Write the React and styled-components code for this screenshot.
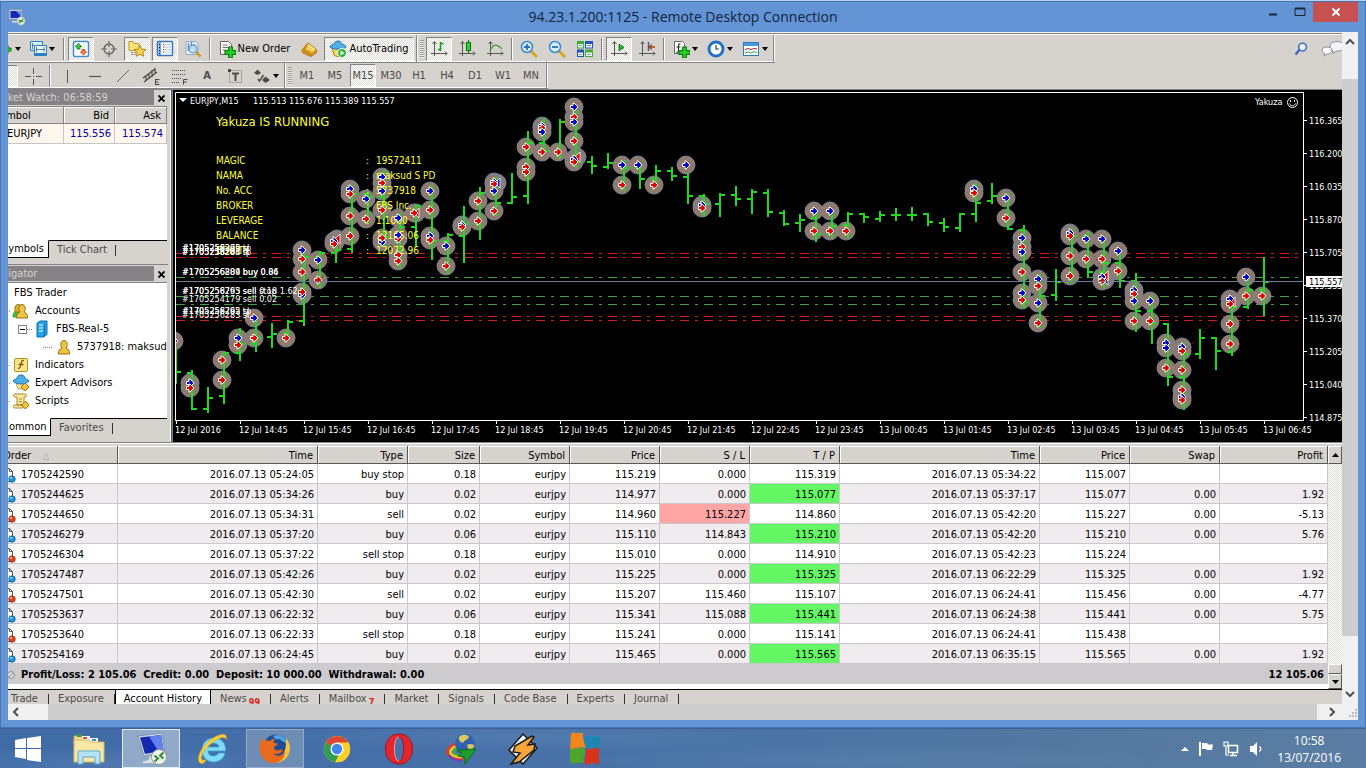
import React from 'react';
import styled, { createGlobalStyle, css } from 'styled-components';

const UI_FONT = '"DejaVu Sans Condensed", "DejaVu Sans", sans-serif';
const FACE = '#d6d3ce';
const dither = 'repeating-conic-gradient(#ffffff 0 25%, #dedbd6 0 50%) 0 0 / 2px 2px';

const GlobalStyle = createGlobalStyle`
  * { box-sizing: border-box; }
  body { margin: 0; font: 11px/14px ${UI_FONT}; color: #000; background: #4a74a9; }
  button { font: inherit; color: inherit; border: 0; padding: 0; background: none; }
  svg { flex: none; }
`;

/* ---------- remote desktop window ---------- */
const Page = styled.div`
  display: flex;
  flex-direction: column;
  min-height: 100vh;
  overflow: hidden;
`;
const Window = styled.section`
  flex: 1;
  display: flex;
  flex-direction: column;
  background: #6294d6;
  border-top: 1px solid #b9d2ee;
  padding-bottom: 8px;
  box-shadow: inset 1px 1px 0 #4673b2, inset -1px -1px 0 #4673b2;
`;
const TitleBar = styled.header`
  display: grid;
  grid-template-columns: 1fr auto 1fr;
  align-items: center;
  height: 31px;
  padding: 0 8px;
`;
const Title = styled.h1`
  margin: 0;
  font: 14px/20px "Open Sans", "Noto Sans", sans-serif;
  color: #14233b;
`;
const WindowButtons = styled.div`
  display: flex;
  justify-content: flex-end;
  align-self: start;
  padding-top: 1px;
`;
const WindowButton = styled.button`
  display: flex;
  align-items: center;
  justify-content: center;
  width: ${(p) => (p.$close ? 45 : 27)}px;
  height: 20px;
  background: ${(p) => (p.$close ? '#c75050' : 'transparent')};
`;
const ViewRow = styled.div`
  flex: 1;
  display: flex;
  margin: 0 8px;
`;
const RemoteView = styled.main`
  flex: 1;
  min-width: 0;
  overflow: hidden;
  background: ${FACE};
`;
/* the remote screen is wider than the view and scrolled a little to the right */
const Desktop = styled.div`
  margin-left: -14px;
`;
const VScroll = styled.div`
  display: flex;
  flex-direction: column;
  align-items: center;
  width: 16px;
  background: #f0f0f0;
`;
const VThumb = styled.div`
  width: 16px;
  flex: 1;
  background: #cdcdcd;
`;
const HScroll = styled.div`
  display: flex;
  height: 16px;
  margin: 0 8px;
  background: #f0f0f0;
`;
const HThumb = styled.div`
  flex: 1;
  background: #cdcdcd;
`;
const ScrollArrow = styled.button`
  display: flex;
  align-items: center;
  justify-content: center;
  width: ${(p) => p.$w || 16}px;
  height: ${(p) => p.$h || 16}px;
  padding: ${(p) => p.$pad || 0};
`;

/* ---------- toolbars ---------- */
const ToolRow = styled.div`
  display: flex;
  align-items: center;
  gap: 2px;
  height: ${(p) => p.$h}px;
  width: max-content;
  border-bottom: 1px solid #848284;
  box-shadow: inset 0 -1px 0 #fff;
`;
const ToolTop = styled.div`
  height: 3px;
  border-top: 1px solid #f2f1ee;
  border-bottom: 1px solid #fff;
  background: #848284;
`;
const ToolStrip = styled.div`
  display: flex;
  justify-content: space-between;
`;
const ToolButton = styled.button`
  display: flex;
  align-items: center;
  justify-content: center;
  gap: 2px;
  width: ${(p) => p.$w || 26}px;
  height: ${(p) => p.$h || 24}px;
  white-space: nowrap;
  ${(p) => p.$muted && css`color: #4c4a48;`}
  ${(p) => p.$on && css`
    background: ${dither};
    border: 1px solid #fff;
    border-top-color: #848284;
    border-left-color: #848284;
  `}
`;
const Divider = styled.span`
  width: 2px;
  height: 22px;
  margin: 0 1px;
  border-left: 1px solid #848284;
  border-right: 1px solid #fff;
`;
const BarEnd = styled.span`
  width: 2px;
  align-self: stretch;
  border-left: 1px solid #848284;
  border-right: 1px solid #fff;
`;
const Grip = styled.span`
  width: 4px;
  height: 18px;
  background: repeating-linear-gradient(#9c9a96 0 1px, #f0eeea 1px 2px);
`;
const ToolRight = styled.div`
  display: flex;
  align-items: center;
  gap: 13px;
  overflow: hidden;
  width: 48px;
`;

/* ---------- side panels ---------- */
const Middle = styled.div`
  display: flex;
  border-top: 1px solid #848284;
`;
const Side = styled.aside`
  display: flex;
  flex-direction: column;
  width: 178px;
  padding-right: 4px;
  box-shadow: inset -1px 0 0 #5a5856, inset -2px 0 0 #fff;
`;
const Panel = styled.section`
  display: flex;
  flex-direction: column;
  height: ${(p) => p.$h}px;
  ${(p) => p.$second && css`border-top: 1px solid #848284; padding-top: 1px;`}
`;
const PanelHead = styled.header`
  display: flex;
  height: 16px;
  h2 {
    flex: 1;
    margin: 0 0 1px;
    text-indent: -5px;
    font: 11px/15px ${UI_FONT};
    background: #848284;
    color: #d6d3ce;
    overflow: hidden;
    white-space: nowrap;
  }
  button { width: 14px; display: flex; align-items: center; justify-content: center; }
`;
const PanelBody = styled.div`
  flex: 1;
  background: #fff;
  border-top: 1px solid #848284;
  overflow: hidden;
  margin-right: 1px;
`;
const Quotes = styled.table`
  width: 100%;
  border-collapse: separate;
  border-spacing: 0;
  table-layout: fixed;
  th {
    height: 17px;
    padding: 1px 5px 0 0;
    font-weight: 400;
    text-align: right;
    background: ${FACE};
    border-right: 1px solid #848284;
    border-bottom: 1px solid #848284;
    box-shadow: inset 1px 1px 0 #fff;
  }
  td {
    height: 20px;
    padding: 0 3px 0 0;
    text-align: right;
    color: #0000a8;
    background: #fff7ed;
    border-right: 1px solid #c8c6c4;
    border-bottom: 1px solid #c8c6c4;
  }
  th:first-child { text-align: left; }
  td:first-child { text-align: left; padding-left: 13px; color: #000; }
`;
const SideTabs = styled.div`
  display: flex;
  height: 24px;
  margin-right: 1px;
  button {
    border-top: 1px solid #000;
    height: 18px;
    padding: 0 8px;
    color: #4c4a48;
  }
  button:first-child {
    width: ${(p) => p.$first}px;
    color: #000;
    background: #fff;
    border-top-color: #fff;
    border-right: 1px solid #000;
    border-bottom: 1px solid #000;
    text-align: left;
  }
  i { flex: 1; height: 18px; border-top: 1px solid #000; }
  i::before { content: ''; display: block; width: 1px; height: 11px; margin-top: 4px; background: #333; }
`;
const Tree = styled.ul`
  margin: 0;
  padding: 1px 0 0 13px;
  list-style: none;
`;
const TreeItem = styled.li`
  display: flex;
  align-items: center;
  gap: 5px;
  height: 18px;
  padding-left: ${(p) => p.$pad}px;
  white-space: nowrap;
`;
const Dots = styled.span`
  flex: none;
  width: ${(p) => p.$w}px;
  height: 1px;
  margin-right: -4px;
  background: repeating-linear-gradient(90deg, #848284 0 1px, transparent 1px 2px);
`;
const Expander = styled.button`
  display: flex;
  flex: none;
  width: 9px;
  height: 9px;
  margin-right: -5px;
  border: 1px solid #848284;
  align-items: center;
  justify-content: center;
  span { width: 5px; height: 1px; background: #000; }
`;
const ChartBox = styled.div`
  flex: 1;
  min-width: 0;
  background: #000;
  svg { display: block; width: 100%; height: auto; font-family: ${UI_FONT}; }
`;

/* ---------- terminal ---------- */
const Terminal = styled.section`
  border-top: 1px solid #848284;
  padding-top: 3px;
  box-shadow: inset 0 1px 0 #fff;
`;
const TerminalBody = styled.div`
  display: flex;
  background: #fff;
`;
const History = styled.table`
  flex: 1;
  min-width: 0;
  width: 100%;
  border-collapse: separate;
  border-spacing: 0;
  table-layout: fixed;
  margin-bottom: 5px;
  th {
    height: 18px;
    padding: 2px 4px 0 0;
    font-weight: 400;
    text-align: right;
    background: ${FACE};
    border-right: 1px solid #5a5856;
    border-bottom: 1px solid #5a5856;
    box-shadow: inset 1px 1px 0 #fff;
  }
  td {
    height: 20px;
    padding: 2px 3px 0 0;
    text-align: right;
    border-right: 1px solid #cac8ca;
    border-bottom: 1px solid #cac8ca;
    white-space: nowrap;
  }
  th:first-child { text-align: left; padding-left: 9px; }
  th:first-child span { margin-left: 12px; color: #9c9a96; font-size: 9px; line-height: 12px; }
  tbody tr:nth-child(even) { background: #efebef; }
  tfoot td {
    font-weight: 700;
    background: #cecbce;
    border: 0;
  }
  tfoot td:last-child { padding-right: 4px; }
`;
const OrderCell = styled.div`
  display: flex;
  align-items: center;
  gap: 5px;
  padding-left: 6px;
`;
const PriceCell = styled.td`
  ${(p) => p.$mark && css`
    background: ${p.$mark === 'tp' ? '#63f763' : '#ffa6a5'};
  `}
`;
const InnerScroll = styled.div`
  display: flex;
  flex-direction: column;
  justify-content: space-between;
  width: 14px;
  background: ${dither};
`;
const InnerButton = styled.button`
  display: flex;
  align-items: center;
  justify-content: center;
  width: 100%;
  height: ${(p) => p.$h}px;
  background: ${FACE};
  border: 1px solid #fff;
  border-right-color: #5a5856;
  border-bottom-color: #5a5856;
`;
const BottomTabs = styled.nav`
  display: flex;
  height: 15px;
  padding-left: 8px;
  border-top: 1px solid #000;
  overflow: hidden;
`;
const BottomTab = styled.button`
  display: flex;
  flex: none;
  height: 20px;
  padding: 2px 11px 0 9px;
  color: #4c4a48;
  background: linear-gradient(#333, #333) right 0 top 4px / 1px 11px no-repeat;
  ${(p) => p.$on && css`
    margin-top: -1px;
    padding: 3px 8px 0;
    color: #000;
    background: #fff;
    border: 1px solid #000;
    border-width: 0 1px;
  `}
  sub {
    margin-left: 2px;
    padding-top: 4px;
    font: 700 9px/12px ${UI_FONT};
    color: #e01818;
  }
`;

/* ---------- taskbar ---------- */
const Taskbar = styled.footer`
  display: flex;
  justify-content: space-between;
  height: 40px;
  background:
    radial-gradient(ellipse 220px 18px at 8% 90%, #6a8fc055, transparent),
    radial-gradient(ellipse 260px 14px at 38% 20%, #7096c440, transparent),
    radial-gradient(ellipse 300px 16px at 64% 80%, #7b9bc033, transparent),
    linear-gradient(90deg, #3f6ba6 0%, #456fa9 25%, #4a74a6 55%, #54789f 80%, #5b7da4 100%);
  border-top: 1px solid #3d6195;
`;
const TaskGroup = styled.div`
  display: flex;
  align-items: center;
  gap: 4px;
`;
const TaskButton = styled.button`
  display: flex;
  align-items: center;
  justify-content: center;
  width: ${(p) => p.$w || 58}px;
  height: 39px;
  ${(p) => p.$state === 'active' && css`
    background: #91a9c8;
    border: 1px solid #e3ecf6;
  `}
  ${(p) => p.$state === 'open' && css`
    background: #6d8db5;
    border: 1px solid #93abc9;
  `}
`;
const Tray = styled.div`
  display: flex;
  align-items: center;
  gap: 9px;
  padding-right: 25px;
`;
const Clock = styled.time`
  margin-left: 4px;
  text-align: center;
  font: 12px/17px "Open Sans", "Noto Sans", sans-serif;
  color: #fff;
`;

/* ---------- icons ---------- */
const Icon = ({ s = 18, w, children, vb }) => (
  <svg width={w || s} height={s} viewBox={vb || '0 0 18 18'} aria-hidden="true" fill="none">{children}</svg>
);
const Caret = () => (
  <svg width="6" height="4" viewBox="0 0 6 4" aria-hidden="true"><path d="M0 0h6L3 4z" fill="#000" /></svg>
);
const Chevron = ({ turn }) => (
  <svg width="10" height="10" viewBox="0 0 10 10" aria-hidden="true" fill="none" stroke="#505050" strokeWidth="2">
    <path d={{ up: 'M1 7l4-4 4 4', down: 'M1 3l4 4 4-4', left: 'M7 1L3 5l4 4', right: 'M3 1l4 4-4 4' }[turn]} />
  </svg>
);
const Plus = ({ x, y, s = 9 }) => (
  <g transform={`translate(${x} ${y}) scale(${s / 9})`}>
    <path d="M3 0h3v3h3v3H6v3H3V6H0V3h3z" fill="#25d425" stroke="#0a7d0a" strokeWidth="1" />
  </g>
);
const Axes = () => <path d="M4.500 2v14M1 13.500h16M2.500 4l2-2.500 2 2.500M15 11.500l2 2-2 2" stroke="#5a5856" />;

const icons = {
  newChart: <Icon><Plus x={7} y={5} /></Icon>,
  profiles: <Icon><path d="M1.500 1.500h12v9h-12z" fill="#d8eefc" stroke="#2a7fc4" /><path d="M5.500 5.500h12v10h-12z" fill="#e6f5ff" stroke="#2a7fc4" /><path d="M5.500 14h12" stroke="#2a7fc4" strokeWidth="2" /><path d="M7.500 7v5M15 7v5M7 9.500h9M3.500 3v6M3 5.500h2" stroke="#5a7f9e" /></Icon>,
  watch: <Icon><rect x="1.500" y="1.500" width="15" height="15" rx="1.500" fill="#fff" stroke="#3c8fd0" strokeWidth="1.500" /><path d="M6.500 3.500l3 3H8V9H5V6.500H3.500z" fill="#3fd04a" stroke="#0d7f1a" strokeWidth=".9" /><path d="M11.500 15l-3-3H10V9.500h3V12h1.500z" fill="#f7835e" stroke="#c8401a" strokeWidth=".9" /></Icon>,
  target: <Icon><circle cx="9" cy="9" r="5" stroke="#6b6967" strokeWidth="1.500" /><path d="M9 1v6M9 11v6M1 9h6M11 9h6" stroke="#6b6967" strokeWidth="1.200" /></Icon>,
  favs: <Icon><path d="M1 1.500h4l1 2h5v7H1z" fill="#f9e37c" stroke="#c09a1c" /><path d="M4 12v4M7 12v4" stroke="#222" strokeDasharray="1 1" /><path d="M12 5.500l1.800 3.700 4 .4-3 2.700.9 4-3.700-2-3.600 2 .8-4-3-2.700 4.100-.4z" fill="#ffd84a" stroke="#b3841a" /></Icon>,
  terminal: <Icon><rect x="1.500" y="1.500" width="15" height="14" rx="1" fill="#fff" stroke="#3776bd" strokeWidth="1.500" /><path d="M2.500 2h2.500v13H2.500z" fill="#6ea8e0" /><path d="M7 4.500h8M7 7h8M7 9.500h8M7 12h8" stroke="#b5c4e8" /><path d="M7.500 4v10" stroke="#b03030" strokeDasharray="1 1.500" /><path d="M3.500 4v10" stroke="#123" strokeDasharray="1 2" /></Icon>,
  tester: <Icon><path d="M2 1.500h10l2 2v11H2z" fill="#e9f1fa" stroke="#8fa6c0" /><path d="M4.500 3v8M7.500 2v7M10.500 4v6" stroke="#6d8fb8" strokeWidth="1.500" /><circle cx="9" cy="9" r="4" fill="#bfe0f7" fillOpacity=".8" stroke="#5590c4" /><path d="M12 12l4.500 4.500" stroke="#d19b2a" strokeWidth="2.500" /></Icon>,
  order: <Icon><path d="M2.500 1.500h8l3 3v10h-11z" fill="#fff" stroke="#666" /><path d="M4.500 5h5M4.500 7.500h6M4.500 10h4" stroke="#777" /><Plus x={7} y={7} s={11} /></Icon>,
  editor: <Icon><path d="M1.500 10.500L8 3l8.500 6.500v3L11 16.500l-8-3.500z" fill="#d98f14" stroke="#a36d10" strokeWidth=".8" /><path d="M8 3l8.500 6.500-5 4.500c-1-3-4-4-7-3z" fill="#f9cf57" stroke="#b8801c" strokeWidth=".8" /><path d="M8.500 5l5.500 4" stroke="#fff0b8" strokeWidth="1.200" /></Icon>,
  auto: <Icon><path d="M3 8l2 7c2 2 6 2 8 0l2-7z" fill="#f4d35b" stroke="#ad8420" /><path d="M1 7c0-2 3-2 4-3s1-3 4-3 3 2 4 3 4 1 4 3c-3 3-13 3-16 0z" fill="#4fb2e8" stroke="#1c78b0" /><circle cx="13" cy="13" r="4.500" fill="#27b93a" stroke="#fff" /><path d="M11.500 10.500v5l4-2.500z" fill="#fff" /></Icon>,
  bars: <Icon><Axes /><path d="M10.500 2v9M10.500 3.500h3M8 9.500h2.500" stroke="#12a012" strokeWidth="1.500" /></Icon>,
  candles: <Icon><Axes /><path d="M10.500 0v13" stroke="#0c700c" /><rect x="8.500" y="2.500" width="4" height="8" fill="#2fd62f" stroke="#0c700c" /></Icon>,
  line: <Icon><Axes /><path d="M4 11c3-7 6-8 12-2" stroke="#35a035" strokeWidth="1.300" /></Icon>,
  zoomIn: <Icon><path d="M11 11l6 6" stroke="#d9a520" strokeWidth="3" /><circle cx="7" cy="7" r="5.500" fill="#d9effc" stroke="#3a86cf" strokeWidth="1.500" /><path d="M4 7h6M7 4v6" stroke="#2a6fc0" strokeWidth="1.800" /></Icon>,
  zoomOut: <Icon><path d="M11 11l6 6" stroke="#d9a520" strokeWidth="3" /><circle cx="7" cy="7" r="5.500" fill="#d9effc" stroke="#3a86cf" strokeWidth="1.500" /><path d="M4 7h6" stroke="#2a6fc0" strokeWidth="1.800" /></Icon>,
  tile: <Icon><rect x="1" y="1" width="7" height="7.500" fill="#3fae2c" /><rect x="9" y="1" width="8" height="7.500" fill="#2450b8" /><rect x="1" y="9.500" width="7" height="7.500" fill="#2450b8" /><rect x="9" y="9.500" width="8" height="7.500" fill="#3fae2c" /><path d="M2 4h5v3.500H2zM10 4h6v3.500h-6zM2 12.500h5V16H2zM10 12.500h6V16h-6z" fill="#eef8ff" /><path d="M3 5.500h3M3 14.500h3M11 14.500h4" stroke="#7a9" /><path d="M11 5.500h4" stroke="#58c" /></Icon>,
  scroll: <Icon><Axes /><path d="M9 4v7l5-3.500z" fill="#25b925" stroke="#0c700c" strokeWidth=".8" /></Icon>,
  shift: <Icon><Axes /><path d="M10.500 2v9" stroke="#2f5fa0" strokeWidth="1.500" /><path d="M17 7h-5M14 4.500L11.500 7 14 9.500" stroke="#b8420f" strokeWidth="1.500" /></Icon>,
  indicators: <Icon><path d="M2.500 1.500h8l2 2v10h-10z" fill="#fff" stroke="#666" /><path d="M8.500 4c-2-.5-2 1-2 2v5c0 1-1 1.500-2 1M4.500 7h4" stroke="#333" strokeWidth="1.200" /><Plus x={7} y={7} s={11} /></Icon>,
  period: <Icon><circle cx="9" cy="9" r="7" fill="#fff" stroke="#2472c8" strokeWidth="3" /><path d="M9 5v4h3" stroke="#345" strokeWidth="1.200" /></Icon>,
  template: <Icon><rect x="1.500" y="2.500" width="15" height="13" fill="#fff" stroke="#2f78c0" /><path d="M2 3h14v3H2z" fill="#4c98dc" /><path d="M3 9.500l3-1 3 1 3-1 3 .5" stroke="#a03030" /><path d="M3 13l3-1 3 1 3-1.500 3 1.500" stroke="#30a050" /></Icon>,
  cursor: <Icon><path d="M2 2l8 8H6z" fill="#555" /></Icon>,
  cross: <Icon><path d="M9.500 1v6M9.500 12v6M1 9.500h6M12 9.500h6" stroke="#555" /><path d="M9 9h1v1H9z" fill="#555" /></Icon>,
  vline: <Icon><path d="M9.500 3v13" stroke="#555" /></Icon>,
  hline: <Icon><path d="M3 9.500h12" stroke="#555" strokeWidth="1.200" /></Icon>,
  trend: <Icon><path d="M3 15L15 3" stroke="#666" /></Icon>,
  channel: <Icon><path d="M1 11L13 2M2 15L15 5M4 8v6M7 6v6M10 3v7M13 1v6" stroke="#4c4a48" strokeWidth="1.200" /><path d="M13.500 12.500h4M13.500 15h3M13.500 17.500h4M13.500 12v6" stroke="#4c4a48" /></Icon>,
  fibo: <Icon><path d="M2 3.500h14M2 7.500h14M2 11.500h9M2 15.500h8" stroke="#4c4a48" strokeDasharray="1 1" /><path d="M13.500 12.500h4M13.500 15h3M13.500 12.500v5" stroke="#4c4a48" /></Icon>,
  label: <Icon><rect x="3.500" y="3.500" width="12" height="12" stroke="#777" strokeDasharray="1 1" /><path d="M6 6.500h7M9.500 6v8" stroke="#4c4a48" strokeWidth="2" /><path d="M2 2h3v3H2z" fill="#4c4a48" /></Icon>,
  arrows: <Icon><path d="M1 6l3.500-3.500L8 6 4.500 8zM9 13l3.500-3.500L17 13l-4.500 3z" fill="#4c4a48" /><path d="M5 12l1.500 2 4-6" stroke="#4c4a48" strokeWidth="1.500" /></Icon>,
};
const People = ({ two }) => (
  <Icon>
    {two && <path d="M1 15c0-4 1-5 3-6-2-3 0-7 3-6s3 4 1 6l2 6z" fill="#3fc43f" stroke="#2a8a2a" strokeWidth=".8" />}
    {two && <path d="M3 10c-1-6 2-9 5-7l1 7z" fill="#d9b02c" stroke="#94700f" strokeWidth=".8" />}
    <path d="M4.500 16c0-3.500 1-5 3.500-6C5.500 7 7 2.500 10 2.500s4.500 4.500 2 7.500c2.500 1 3.500 2.500 3.500 6z" fill="#edc544" stroke="#94700f" strokeWidth="1" />
  </Icon>
);
const Server = () => <Icon><path d="M4 3l3-2h7v13l-3 3H4z" fill="#27a3e8" stroke="#0c6fae" /><path d="M6 5h4M6 8h4M6 11h4" stroke="#fff" /><path d="M11.500 4v13" stroke="#0c6fae" /></Icon>;
const Func = () => <Icon><rect x="2.500" y="2.500" width="13" height="13" rx="1.500" fill="#fbe58a" stroke="#b8901e" /><path d="M12 4.500c-2-.5-2.500 1-3 4s-1 4-3 4M6.500 8.500h5" stroke="#7a5a10" strokeWidth="1.300" /></Icon>;
const Hat = () => <Icon><path d="M4 9h8l-1 6H6z" fill="#f4e2a0" stroke="#ad8420" strokeWidth=".7" /><path d="M1 7c1-2 3-1 4-3s1-3 4-3 3 1 4 3 3 1 4 3c-3 4-13 4-16 0z" fill="#4aaee6" stroke="#1d78ae" /><path d="M13 9l4 4-4 4-4-4z" fill="#f3c23a" stroke="#9e7414" /></Icon>;
const Scroll = () => <Icon><path d="M3 2h10c2 0 2 3 0 3H12v8H5V5H3C1 5 1 2 3 2zM3 13h8v3H3c-2 0-2-3 0-3z" fill="#fbe9a4" stroke="#ad8420" /><path d="M7 7h3M7 9.500h3" stroke="#ad8420" /><path d="M13.500 9l3.500 4-3.500 4-4-4z" fill="#f3c23a" stroke="#9e7414" /></Icon>;
const DocIcon = ({ sell }) => (
  <Icon s={16} vb="0 0 16 16">
    <path d="M.5 1.500h9l3 3v10h-12z" fill="#fff" stroke="#5a5856" /><path d="M9.500 1.500v3h3" stroke="#5a5856" />
    <circle cx="12" cy="12" r="3.200" fill={sell ? '#e2481d' : '#1e96e0'} stroke={sell ? '#8f2408' : '#0a5a94'} strokeWidth=".8" />
    <circle cx="11" cy="11" r="1" fill="#fff" fillOpacity=".7" />
  </Icon>
);
const RdpIcon = ({ s = 18 }) => (
  <Icon s={s}>
    <path d="M1 1.500h13v10H1z" fill="#c8ccd4" stroke="#7c8696" strokeWidth=".6" /><path d="M2.500 3h10v7h-10z" fill="#1029b8" /><path d="M8 3h4.500v5z" fill="#6f8dee" />
    <path d="M4 13h6v1.500H4z" fill="#d8dade" /><circle cx="13" cy="13" r="4.200" fill="#e9efe9" stroke="#8d9b8d" strokeWidth=".7" />
    <path d="M10.800 12l2 1.500-2 1.500M15.300 11l-2 1.500 2 1.500" stroke="#1f8a2a" strokeWidth="1.100" />
  </Icon>
);

/* ---------- chart data: [high, low, open, close] per bar ---------- */
const BAR_DATA = [
  [348, 383, 350, 372], [370, 409, 373, 409], [387, 412, 409, 398], [352, 403, 396, 353], [328, 360, 353, 344],
  [320, 351, 344, 338], [323, 347, 337, 334], [320, 337, 333, 322], [250, 325, 321, 257], [251, 287, 257, 253],
  [237, 262, 253, 250], [185, 252, 249, 194], [192, 223, 194, 197], [170, 245, 197, 237], [213, 268, 242, 227],
  [205, 245, 227, 206], [185, 259, 207, 241], [233, 273, 241, 235], [206, 262, 236, 224], [187, 239, 224, 193],
  [177, 215, 193, 203], [173, 203, 203, 197], [131, 203, 196, 143], [118, 153, 143, 151], [119, 158, 152, 122],
  [107, 167, 122, 162], [156, 173, 162, 166], [153, 168, 167, 163], [160, 190, 164, 168], [162, 188, 168, 179],
  [165, 185, 179, 171], [167, 180, 171, 176], [173, 203, 177, 196], [194, 216, 196, 204], [193, 216, 204, 195],
  [186, 205, 195, 199], [189, 213, 199, 192], [189, 216, 193, 212], [210, 225, 213, 224], [214, 231, 223, 220],
  [213, 241, 218, 234], [212, 237, 234, 226], [212, 237, 225, 214], [213, 222, 214, 217], [211, 221, 219, 215],
  [208, 220, 215, 215], [207, 220, 215, 215], [213, 225, 214, 222], [218, 231, 223, 227], [213, 231, 228, 214],
  [183, 221, 214, 203], [183, 203, 201, 196], [193, 229, 196, 229], [225, 308, 230, 302], [274, 327, 302, 296],
  [269, 300, 295, 282], [228, 282, 282, 236], [232, 277, 236, 272], [237, 287, 272, 263], [250, 287, 263, 281],
  [273, 331, 281, 311], [295, 343, 311, 323], [323, 385, 324, 377], [343, 409, 377, 354], [329, 358, 354, 338],
  [337, 369, 338, 351], [298, 355, 352, 307], [277, 308, 307, 290], [257, 315, 290, 282],
];
const MARKS = {
  0: 'b341', 1: 'b383 r388', 3: 'r360 r380', 4: 'b338 r345', 5: 'b318 r338', 7: 'r338',
  8: 'b250 r259 r272 b295 r292', 9: 'b260 r280', 10: 'b241 r244', 11: 'b189 r194 r216 r236', 12: 'b199 r219',
  13: 'b177 r183 b191 r210 b242 r238', 14: 'b218 r239 b235 r255 r261', 15: 'r213', 16: 'b191 r210 b236 r240',
  17: 'b246 r266', 18: 'b225 r227', 19: 'r201 r221', 20: 'b182 r184 b191 r211', 22: 'r147 r167 r172',
  23: 'b126 r128 b132 r152', 24: 'r152', 25: 'b107 r117 b122 r141 b159 r162', 28: 'b165 r185', 29: 'b165',
  30: 'r185', 32: 'b165', 33: 'b205 r208', 40: 'b211 r231', 41: 'b211 r231', 42: 'r231', 50: 'b189 r193',
  52: 'b198 r218', 53: 'b238 r247 b252 r272 b293 r300', 54: 'b279 r286 b303 r323', 56: 'b233 r236 r256 r276',
  57: 'b239 r259', 58: 'b239 r259 b277 r281', 59: 'b251 r271', 60: 'b290 r294 b301 r321', 61: 'b301 r321',
  62: 'b343 b348 r368', 63: 'b347 r351 r370 r390 b397 r400', 66: 'b299 r304 r324 r344', 67: 'b277 r296', 68: 'r296',
};
const BACK_MARKS = [[339, 239, 'r'], [418, 213, 'r'], [499, 183, 'b'], [579, 157, 'r'], [1107, 280, 'b'], [1107, 276, 'r'], [1234, 302, 'r']];
const barX = (i) => 176 + 16 * i;
const marks = Object.entries(MARKS).flatMap(([i, list]) =>
  list.split(' ').map((m) => ({ x: barX(+i) - 2, y: +m.slice(1), c: m[0] })));
const markColor = { b: '#0000c8', r: '#e60000' };
const RED = '#d01c1c';
const GREEN = '#3fa03f';
const LEVELS = [[253, RED], [257, RED], [277, GREEN], [296, GREEN], [304, GREEN], [316, RED], [320, RED]];
const PRICES = ['116.365', '116.200', '116.035', '115.870', '115.705', '115.535', '115.370', '115.205', '115.040', '114.875'];
const TIMES = ['12 Jul 2016', '12 Jul 14:45', '12 Jul 15:45', '12 Jul 16:45', '12 Jul 17:45', '12 Jul 18:45', '12 Jul 19:45', '12 Jul 20:45', '12 Jul 21:45', '12 Jul 22:45', '12 Jul 23:45', '13 Jul 00:45', '13 Jul 01:45', '13 Jul 02:45', '13 Jul 03:45', '13 Jul 04:45', '13 Jul 05:45', '13 Jul 06:45'];
const INFO = [['MAGIC', '19572411'], ['NAMA', 'maksud S PD'], ['No. ACC', '5737918'], ['BROKER', 'FBS Inc.'], ['LEVERAGE', '1:1000'], ['BALANCE', '12105.06'], ['EQUITY', '12072.96']];
const ORDER_LABELS = [
  [251, '#1705258265 tp'], [251, '#1705256379 sl'], [255, '#1705258204 tp'], [255, '#1705256283 sl'],
  [275, '#1705256204 buy 0.84'], [275, '#1705256889 buy 0.06'],
  [294, '#1705258265 sell 0.18 1.62'], [294, '#1705256793 sell stop'], [302, '#1705254179 sell 0.02'],
  [314, '#1705258265 tp'], [314, '#1705256792 sl'], [318, '#1705256283 sl'],
];

const Chart = () => (
  <svg viewBox="172 90 1170 352" role="img" aria-label="EURJPY M15 price chart">
    <clipPath id="plot"><path d="M176 92h1127v328H176z" /></clipPath>
    <rect x="172" y="90" width="1170" height="352" fill="#000" />
    <path d="M172.500 90v352" stroke="#848284" />
    {LEVELS.map(([y, c]) => (
      <path key={y} d={`M176 ${y}.5H1299`} stroke={c} strokeDasharray="9 6 3 6" />
    ))}
    <g fill="#8f7a6c" stroke="#74859a" strokeWidth="1" clipPath="url(#plot)">
      {BACK_MARKS.map(([x, y], i) => <circle key={i} cx={x - 2} cy={y} r="9" />)}
      {marks.map((m, i) => <circle key={i} cx={m.x} cy={m.y} r="9" />)}
    </g>
    <path d="M1186 350l46-47M322 278l15-36M401 240l15-32M1088 245l18 30" stroke="#c01818" strokeDasharray="3 2 1 2" strokeWidth=".8" />
    <g stroke="#22d822" strokeWidth="2" fill="none">
      {BAR_DATA.map(([h, l, o, c], i) => (
        <path key={i} d={`M${barX(i)} ${h}V${l + 1}${i ? `M${barX(i) - 5} ${o}h5` : ''}M${barX(i)} ${c}h5`} />
      ))}
    </g>
    <g fill="#ffff33" fontSize="10">
      <text x="216" y="126" fontSize="13">Yakuza IS RUNNING</text>
      {INFO.map(([k, v], i) => (
        <React.Fragment key={k}>
          <text x="216" y={164 + 15 * i}>{k}</text>
          <text x="366" y={164 + 15 * i}>:</text>
          <text x="376" y={164 + 15 * i}>{v}</text>
        </React.Fragment>
      ))}
    </g>
    <g clipPath="url(#plot)">
      {BACK_MARKS.map(([x, y, c], i) => (
        <path key={i} d={`M${x - 4} ${y}l5-5v10z`} fill={markColor[c]} stroke="#fff" strokeWidth=".8" />
      ))}
      {marks.map((m, i) => (
        <path key={i} d={`M${m.x - 3.5} ${m.y - 1.5}h2.500v-2.500h1l4 4-4 4h-1v-2.500h-2.500z`} fill={markColor[m.c]} stroke="#fff" strokeWidth="1" />
      ))}
    </g>
    <path d="M176 281.500H1303" stroke="#708090" />
    <path d="M175.500 420V92.500H1303.500V420.500H175" fill="none" stroke="#fff" />
    <g fill="#fff" fontSize="9">
      <path d="M179 98h8l-4 4z" />
      <text x="190" y="104">EURJPY,M15</text>
      <text x="253" y="104">115.513 115.676 115.389 115.557</text>
      {ORDER_LABELS.map(([y, t], i) => <text key={i} x="182" y={y}>{t}</text>)}
      <text x="1255" y="105">Yakuza</text>
      {PRICES.map((p, i) => (
        <React.Fragment key={p}>
          <path d={`M1304 ${120 + 33 * i}h3v1h-3z`} />
          <text x="1309" y={124 + 33 * i}>{p}</text>
        </React.Fragment>
      ))}
      <path d="M1306 276h36v11h-36z" />
      <text x="1309" y="285" fill="#000">115.557</text>
      {TIMES.map((t, i) => (
        <React.Fragment key={t}>
          <path d={`M${176 + 64 * i} 421h1v3h-1z`} />
          <text x={175 + 64 * i} y="433">{t}</text>
        </React.Fragment>
      ))}
    </g>
    <g fill="none" stroke="#fff">
      <circle cx="1292.500" cy="102.500" r="5" />
      <path d="M1289.500 103.500c1 3 5 3 6 0M1290.500 100v2M1294.500 100v2" />
    </g>
  </svg>
);

const COLUMNS = [['Order', 124], ['Time', 200], ['Type', 90], ['Size', 72], ['Symbol', 90], ['Price', 90], ['S / L', 90], ['T / P', 90], ['Time', 200], ['Price', 90], ['Swap', 90], ['Profit', 108]];
const ROWS = [
  ['1705242590', '05:24:05', 'buy stop', '0.18', '115.219', '0.000', '115.319', '05:34:22', '115.007', '', ''],
  ['1705244625', '05:34:26', 'buy', '0.02', '114.977', '0.000', '115.077', '05:37:17', '115.077', '0.00', '1.92', 'tp'],
  ['1705244650', '05:34:31', 'sell', '0.02', '114.960', '115.227', '114.860', '05:42:20', '115.227', '0.00', '-5.13', 'sl'],
  ['1705246279', '05:37:20', 'buy', '0.06', '115.110', '114.843', '115.210', '05:42:20', '115.210', '0.00', '5.76', 'tp'],
  ['1705246304', '05:37:22', 'sell stop', '0.18', '115.010', '0.000', '114.910', '05:42:23', '115.224', '', ''],
  ['1705247487', '05:42:26', 'buy', '0.02', '115.225', '0.000', '115.325', '06:22:29', '115.325', '0.00', '1.92', 'tp'],
  ['1705247501', '05:42:30', 'sell', '0.02', '115.207', '115.460', '115.107', '06:24:41', '115.456', '0.00', '-4.77'],
  ['1705253637', '06:22:32', 'buy', '0.06', '115.341', '115.088', '115.441', '06:24:38', '115.441', '0.00', '5.75', 'tp'],
  ['1705253640', '06:22:33', 'sell stop', '0.18', '115.241', '0.000', '115.141', '06:24:41', '115.438', '', ''],
  ['1705254169', '06:24:45', 'buy', '0.02', '115.465', '0.000', '115.565', '06:35:15', '115.565', '0.00', '1.92', 'tp'],
];
const TABS = [['Trade'], ['Exposure'], ['Account History'], ['News', '99'], ['Alerts'], ['Mailbox', '7'], ['Market'], ['Signals'], ['Code Base'], ['Experts'], ['Journal']];

const Tool = ({ icon, menu, label, ...rest }) => (
  <ToolButton type="button" aria-label={label || icon} {...rest}>{icons[icon]}{menu && <Caret />}</ToolButton>
);
const CloseX = () => (
  <svg width="7" height="7" viewBox="0 0 7 7" aria-hidden="true"><path d="M0.500 0.500l6 6M6.500 0.500l-6 6" stroke="#000" strokeWidth="1.800" /></svg>
);

const Toolbars = () => (
  <>
    <ToolTop />
    <ToolStrip>
      <ToolRow $h={28}>
        <Tool icon="newChart" menu $w={28} />
        <Tool icon="profiles" menu $w={36} />
        <Divider />
        <Tool icon="watch" $on />
        <Tool icon="target" />
        <Tool icon="favs" $on />
        <Tool icon="terminal" $on />
        <Tool icon="tester" />
        <Divider />
        <ToolButton type="button" $w={80}>{icons.order}New Order</ToolButton>
        <Tool icon="editor" />
        <ToolButton type="button" $w={90} $on>{icons.auto}AutoTrading</ToolButton>
        <BarEnd />
        <Grip />
        <Tool icon="bars" $on />
        <Tool icon="candles" />
        <Tool icon="line" />
        <Divider />
        <Tool icon="zoomIn" />
        <Tool icon="zoomOut" />
        <Tool icon="tile" />
        <Divider />
        <Tool icon="scroll" $on />
        <Tool icon="shift" />
        <Divider />
        <Tool icon="indicators" menu $w={33} />
        <Tool icon="period" menu $w={33} />
        <Tool icon="template" menu $w={33} />
        <BarEnd />
      </ToolRow>
      <ToolRight>
        <Icon s={14}><circle cx="11" cy="6.500" r="5" fill="#eef4ff" stroke="#3f6cc0" strokeWidth="2" /><path d="M7 10l-5 6" stroke="#3f6cc0" strokeWidth="3" /></Icon>
        <Icon s={16} w={24} vb="0 0 24 16"><path d="M9 5c0-6 14-6 14 0s-8 5-8 5l-3 3v-3c-2-1-3-3-3-5z" fill="#f4f4f8" stroke="#8c8a90" /><path d="M1 9c0-4 10-4 10 0s-5 4-5 4l-3 2 .5-2.500C2 12 1 10 1 9z" fill="#fff" stroke="#8c8a90" /></Icon>
      </ToolRight>
    </ToolStrip>
    <ToolRow $h={26}>
      <Tool icon="cursor" $w={24} $h={22} $on />
      <Tool icon="cross" $h={22} />
      <Divider />
      {['vline', 'hline', 'trend', 'channel', 'fibo'].map((n) => <Tool key={n} icon={n} $h={22} />)}
      <ToolButton type="button" $h={22} $muted><b>A</b></ToolButton>
      <Tool icon="label" $h={22} />
      <Tool icon="arrows" menu $w={32} $h={22} />
      <BarEnd />
      <Grip />
      {['M1', 'M5', 'M15', 'M30', 'H1', 'H4', 'D1', 'W1', 'MN'].map((t) => (
        <ToolButton key={t} type="button" $h={23} $muted $on={t === 'M15'}>{t}</ToolButton>
      ))}
      <BarEnd />
    </ToolRow>
  </>
);

const SidePanels = () => (
  <Side>
    <Panel $h={174}>
      <PanelHead><h2>Market Watch: 06:58:59</h2><button type="button" aria-label="Close Market Watch"><CloseX /></button></PanelHead>
      <PanelBody>
        <Quotes>
          <colgroup><col /><col width="51" /><col width="52" /></colgroup>
          <thead><tr><th>Symbol</th><th>Bid</th><th>Ask</th></tr></thead>
          <tbody><tr><td>EURJPY</td><td>115.556</td><td>115.574</td></tr></tbody>
        </Quotes>
      </PanelBody>
      <SideTabs $first={55}><button type="button">Symbols</button><button type="button">Tick Chart</button><i /></SideTabs>
    </Panel>
    <Panel $second $h={178}>
      <PanelHead><h2>Navigator</h2><button type="button" aria-label="Close Navigator"><CloseX /></button></PanelHead>
      <PanelBody>
        <Tree>
          <TreeItem $pad={7}>FBS Trader</TreeItem>
          <TreeItem $pad={0}><Dots $w={4} /><People two />Accounts</TreeItem>
          <TreeItem $pad={11}><Expander type="button" aria-label="Collapse"><span /></Expander><Dots $w={5} /><Server />FBS-Real-5</TreeItem>
          <TreeItem $pad={36}><Dots $w={10} /><People />5737918: maksud S PD</TreeItem>
          <TreeItem $pad={0}><Dots $w={4} /><Func />Indicators</TreeItem>
          <TreeItem $pad={0}><Dots $w={4} /><Hat />Expert Advisors</TreeItem>
          <TreeItem $pad={0}><Dots $w={4} /><Scroll />Scripts</TreeItem>
        </Tree>
      </PanelBody>
      <SideTabs $first={57}><button type="button">Common</button><button type="button">Favorites</button><i /></SideTabs>
    </Panel>
  </Side>
);

const HistoryPanel = () => (
  <Terminal>
    <TerminalBody>
      <History>
        <colgroup>{COLUMNS.map(([, w], i) => <col key={i} width={w} />)}</colgroup>
        <thead>
          <tr>{COLUMNS.map(([n], i) => <th key={i}>{n}{i === 0 && <span>△</span>}</th>)}</tr>
        </thead>
        <tbody>
          {ROWS.map(([id, t1, type, size, p1, sl, tp, t2, p2, swap, profit, mark]) => (
            <tr key={id}>
              <td><OrderCell><DocIcon sell={type.startsWith('sell')} />{id}</OrderCell></td>
              <td>2016.07.13 {t1}</td>
              <td>{type}</td>
              <td>{size}</td>
              <td>eurjpy</td>
              <td>{p1}</td>
              <PriceCell $mark={mark === 'sl' && 'sl'}>{sl}</PriceCell>
              <PriceCell $mark={mark === 'tp' && 'tp'}>{tp}</PriceCell>
              <td>2016.07.13 {t2}</td>
              <td>{p2}</td>
              <td>{swap}</td>
              <td>{profit}</td>
            </tr>
          ))}
        </tbody>
        <tfoot>
          <tr>
            <td colSpan={10}>
              <OrderCell>
                <Icon s={16} vb="0 0 16 16"><circle cx="11" cy="8" r="3.500" fill="#ddd" stroke="#888" /><path d="M9 10l4-4" stroke="#888" /></Icon>
                Profit/Loss: 2 105.06&nbsp; Credit: 0.00&nbsp; Deposit: 10 000.00&nbsp; Withdrawal: 0.00
              </OrderCell>
            </td>
            <td colSpan={2}>12 105.06</td>
          </tr>
        </tfoot>
      </History>
      <InnerScroll>
        <InnerButton type="button" aria-label="Scroll up" $h={18}><svg width="7" height="4" viewBox="0 0 7 4"><path d="M0 4h7L3.500 0z" /></svg></InnerButton>
        <div>
          <InnerButton as="div" $h={10} />
          <InnerButton type="button" aria-label="Scroll down" $h={15}><svg width="7" height="4" viewBox="0 0 7 4"><path d="M0 0h7L3.500 4z" /></svg></InnerButton>
        </div>
      </InnerScroll>
    </TerminalBody>
    <BottomTabs>
      {TABS.map(([name, count]) => (
        <BottomTab key={name} type="button" $on={name === 'Account History'}>{name}{count && <sub>{count}</sub>}</BottomTab>
      ))}
    </BottomTabs>
  </Terminal>
);

const TASKS = {
  explorer: <Icon s={32} vb="0 0 32 32"><path d="M1 3h7l2 2h6v5H1z" fill="#f1d98a" stroke="#c9a94e" /><path d="M4 1h5v3H4z" fill="#3a9b52" /><path d="M9 3h8v4H9z" fill="#fff" /><path d="M10 4h4v2h-4z" fill="#d9502e" /><path d="M17 5h8v4h-8z" fill="#fff" /><path d="M19 6h4v2h-4z" fill="#3b8fd8" /><path d="M1 7h15l2 2h13v20H1z" fill="#f8e7a5" stroke="#d5b85e" /><path d="M5 31V19c0-1 1-1 1-1h20c1 0 1 1 1 1v12h-5v-7H10v7z" fill="#b5e2f6" stroke="#58a9d0" /></Icon>,
  rdp: <Icon s={32} vb="0 0 32 32"><path d="M3 3l24-3 3 19-21 4z" fill="#d5dae4" stroke="#8490a8" /><path d="M5 4.500L26 2l2.500 15.500L10 21z" fill="#1228b0" /><path d="M14 3.500L26 2l2.500 15.500-5 1z" fill="#5f80ee" /><path d="M14 23h7l2 4h2l-1 3-16 .500-1-2 7-2z" fill="#dfe3ea" stroke="#9aa4b4" strokeWidth=".6" /><circle cx="24" cy="24" r="7.500" fill="#eef2ee" stroke="#8d9b8d" /><path d="M19.500 22.500l3.500 3-3.500 3M28.500 19.500l-3.500 3 3.500 3" stroke="#2a8a2a" strokeWidth="2" /></Icon>,
  ie: <Icon s={32} vb="0 0 32 32"><path d="M28 20h-6.500c-1 2-3 3-5.500 3-3 0-5-2-5-5h17.500C29 10 24 5 17 5S5 10 5 17s5 12 11.500 12S27 25 28 20zM11 14c.5-2.500 2.500-4 5.500-4s5 1.500 5.500 4z" fill="#7fdcf9" stroke="#3aa4d8" strokeWidth=".8" /><path d="M5 30.500c-2.500 0-4-2-3.500-6C3 15 14 4 24 1.500c4-1 6 1 5.500 5C28.500 4.500 26 4 23.500 5 15 8 6 17 4.500 24c-.5 3 1.500 4 4.500 2.500C8 29 7 30.500 5 30.500z" fill="#f7cf3a" stroke="#d19e16" strokeWidth=".5" /></Icon>,
  firefox: <Icon s={32} vb="0 0 32 32"><circle cx="17" cy="14" r="12.500" fill="#1a4f98" /><path d="M14 3c6-3 14 0 14 9-2-4-5-3-7-6-3 1-5 0-7-3z" fill="#4fa4e0" /><path d="M27 5c6 7 5 17-2 22-5 4-13 3-15 1 12 1 18-8 17-23z" fill="#fbc73a" /><path d="M3 4c0 2 1 3 2 4 2-1 4-1 6 0 1-1 3-3 5-2-1 2-2 3-1 4 2 0 4 0 4 1s-3 2-4 3c0 3 2 4 5 3 2-1 3 0 4 1-3 3-7 4-10 2 4 5 11 3 12-4 1 9-5 15-13 14C3 29-2 18 2 8c0-1 0-3 1-4z" fill="#ea6a1c" /></Icon>,
  chrome: <Icon s={30} vb="0 0 32 32"><circle cx="16" cy="16" r="14" fill="#fcd12a" /><path d="M16 16L4 9A14 14 0 0 1 28 9z" fill="#de4436" /><path d="M4 9a14 14 0 0 0 10 21l6-11-4-3z" fill="#2f9e4f" /><path d="M28 9H16l4 10-6 11A14 14 0 0 0 28 9z" fill="#fcd12a" /><circle cx="16" cy="16" r="7" fill="#fff" /><circle cx="16" cy="16" r="5.500" fill="#3f86ee" /></Icon>,
  opera: <Icon s={32} vb="0 0 32 32"><path fillRule="evenodd" d="M16 1c8 0 13.500 6 13.500 15S24 31 16 31 2.500 25 2.500 16 8 1 16 1zm0 3c-3 0-4.500 5-4.500 12S13 28 16 28s4.500-5 4.500-12S19 4 16 4z" fill="#e4252c" stroke="#a0141a" /><path d="M16 4c-3 0-4.500 5-4.500 12S13 28 16 28" stroke="#f6b0b3" /></Icon>,
  idm: <Icon s={32} vb="0 0 32 32"><path d="M12 11C4 12 1 18 3 21c2 4 9 6 15 5" stroke="#e03c2a" strokeWidth="2.500" /><path d="M13 13c-6 1-9 5-7 8 2 2 6 3 11 3" stroke="#f5c518" strokeWidth="2.500" /><path d="M14 15c-5 1-6 3-5 5s4 2 7 2" stroke="#3fae4a" strokeWidth="2.500" /><path d="M4 22c2 4 8 6 13 6" stroke="#6a3fc0" strokeWidth="2" /><circle cx="20" cy="11" r="10" fill="#2d62b4" /><path d="M14 4c4-4 10-2 10 0-2 4-4 2-5 5-3 2-6-2-5-5zM22 12c3-2 7-1 7 1-1 3-3 5-5 5z" fill="#dcc85a" /><path d="M12 17l19-1-11 15v-7l-7-1 4-3z" fill="#1f9c2c" stroke="#0b6e16" /></Icon>,
  winamp: <Icon s={32} vb="0 0 32 32"><path d="M16 1l14 14-14 16L2 17z" fill="#f8f8f8" stroke="#1a1a1a" strokeWidth="1.500" /><path d="M25 3L8 13l-2 6 7 1-9 11 8-2 15-12 1-6-7 1 6-8z" fill="#f7a43b" stroke="#1a1a1a" strokeWidth="1.500" /></Icon>,
  avg: <Icon s={32} vb="0 0 32 32"><path d="M2 0h12c-1 5 2 9 3 15-5-2-10 1-16 1z" fill="#f0861c" /><path d="M15 3c6-1 10 2 16 0v12c-5-1-9 3-14 0-1-4-3-8-2-12z" fill="#1f86b4" /><path d="M1 16c6 0 11-3 15 0 1 5-3 10-1 14-5-1-9 1-14 0z" fill="#4ea52c" /><path d="M17 15c4 3 9-1 13 0v16l-6-1-8 2c-1-6 2-11 1-17z" fill="#d8321e" /></Icon>,
};

export default function App() {
  return (
    <Page>
      <GlobalStyle />
      <Window>
        <TitleBar>
          <RdpIcon />
          <Title>94.23.1.200:1125 - Remote Desktop Connection</Title>
          <WindowButtons>
            <WindowButton type="button" aria-label="Minimize"><Icon s={12} vb="0 0 12 12"><path d="M2 8.500h8" stroke="#1a2433" strokeWidth="2" /></Icon></WindowButton>
            <WindowButton type="button" aria-label="Maximize"><Icon s={12} vb="0 0 12 12"><path d="M1 2.500h10v7H1z" stroke="#1a2433" /><path d="M1 2.500h10" stroke="#1a2433" strokeWidth="2" /></Icon></WindowButton>
            <WindowButton type="button" aria-label="Close" $close><Icon s={10} vb="0 0 10 10"><path d="M1.500 1.500l7 7M8.500 1.500l-7 7" stroke="#fff" strokeWidth="1.800" /></Icon></WindowButton>
          </WindowButtons>
        </TitleBar>
        <ViewRow>
          <RemoteView>
            <Desktop>
              <Toolbars />
              <Middle>
                <SidePanels />
                <ChartBox><Chart /></ChartBox>
              </Middle>
              <HistoryPanel />
            </Desktop>
          </RemoteView>
          <VScroll>
            <ScrollArrow type="button" aria-label="Scroll up" $h={47} $pad="0 0 28px"><Chevron turn="up" /></ScrollArrow>
            <VThumb />
            <ScrollArrow type="button" aria-label="Scroll down" $h={68} $pad="48px 0 0"><Chevron turn="down" /></ScrollArrow>
          </VScroll>
        </ViewRow>
        <HScroll>
          <ScrollArrow type="button" aria-label="Scroll left"><Chevron turn="left" /></ScrollArrow>
          <ScrollArrow as="span" $w={24} />
          <HThumb />
          <ScrollArrow type="button" aria-label="Scroll right" $w={30}><Chevron turn="right" /></ScrollArrow>
          <Icon s={16} w={11} vb="0 0 11 16"><path d="M8 5h2v2H8zM5 8h2v2H5zM8 8h2v2H8zM2 11h2v2H2zM5 11h2v2H5zM8 11h2v2H8z" fill="#bbb" /></Icon>
        </HScroll>
      </Window>
      <Taskbar>
        <TaskGroup>
          <TaskButton type="button" aria-label="Start" $w={56}>
            <Icon s={26} vb="0 0 26 26"><path d="M0 4l11-2v10H0zM12 2l14-2v12H12zM0 13h11v10L0 21zM12 13h14v13l-14-2z" fill="#fff" /></Icon>
          </TaskButton>
          {Object.entries(TASKS).map(([name, icon]) => (
            <TaskButton key={name} type="button" aria-label={name} $state={{ rdp: 'active', firefox: 'open' }[name]}>{icon}</TaskButton>
          ))}
        </TaskGroup>
        <Tray>
          <Icon s={8} vb="0 0 8 8"><path d="M0 6h8L4 2z" fill="#fff" /></Icon>
          <Icon s={16} vb="0 0 16 16"><path d="M2 1v14" stroke="#fff" strokeWidth="2" /><path d="M4 2h5l1 1.500h5L14 9H9L8 8H4z" fill="#fff" /></Icon>
          <Icon s={16} vb="0 0 16 16"><path d="M5.500 4.500h9v7h-9zM7 14.500h7M10 12v2" stroke="#fff" strokeWidth="1.500" /><path d="M1 1h4v4H1zM3 5v9h3" stroke="#fff" strokeWidth="1.200" /></Icon>
          <Icon s={16} vb="0 0 16 16"><path d="M2 5h3l4-4v14l-4-4H2z" fill="#fff" /><path d="M11.500 5.500c1.500 1.500 1.500 3.500 0 5" stroke="#fff" strokeWidth="1.300" /></Icon>
          <Clock>10:58<br />13/07/2016</Clock>
        </Tray>
      </Taskbar>
    </Page>
  );
}
